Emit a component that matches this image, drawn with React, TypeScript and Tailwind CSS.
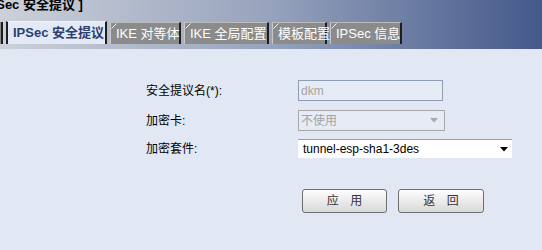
import React from "react";

const tabs = ["IKE 对等体", "IKE 全局配置", "模板配置", "IPSec 信息"];
const tabWidths = [71, 85, 55, 72];

function Notch() {
  return (
    <svg className="absolute left-0 top-0" width="6" height="6" viewBox="0 0 6 6">
      <line x1="0.5" y1="5.5" x2="5.5" y2="0.5" stroke="#f2f2f2" strokeWidth="1" />
    </svg>
  );
}

function Arrow({ color }: { color: string }) {
  return (
    <svg width="8" height="5" viewBox="0 0 8 5">
      <polygon points="0,0 8,0 4,4.5" fill={color} />
    </svg>
  );
}

export default function App() {
  const font = { fontFamily: '"Liberation Sans", "Noto Sans CJK SC", sans-serif' };
  return (
    <div className="w-[542px] h-[250px] overflow-hidden bg-[#e1e8f4] flex flex-col" style={font}>
      <div className="h-[49px] bg-gradient-to-r from-[#ccd1d9] via-[#97a3bd] to-[#45598a] flex flex-col">
        <div className="h-[26px] -mt-[5px] -ml-[24px] text-[13px] font-bold text-black leading-[20px] whitespace-nowrap">
          [ IPSec 安全提议 ]
        </div>
        <div className="flex items-end h-[23px] gap-[3px]">
          <div className="w-[3px] h-[22px] bg-[#8c8c8c] border-r-2 border-[#1e1e1e]" />
          <div className="relative w-[101px] h-[23px] bg-[#e3eaf6] border-l-2 border-l-[#1e1e1e] border-r-2 border-r-[#1e1e1e] border-t border-t-[#f4f4f4] flex items-center pl-[5px] text-[13px] font-bold text-[#2b3f72] whitespace-nowrap">
            <Notch />
            IPSec 安全提议
          </div>
          {tabs.map((t, i) => (
            <div
              key={t}
              className="relative h-[22px] bg-[#8b8b8b] border-t border-t-[#bcbcbc] border-l border-l-[#c9c9c9] border-r-2 border-r-[#1e1e1e] flex items-center pl-[5px] text-[13px] text-white whitespace-nowrap"
              style={{ width: tabWidths[i] }}
            >
              <Notch />
              {t}
            </div>
          ))}
        </div>
      </div>
      <div className="flex flex-col pl-[146px] pt-[31px] text-[12px] text-black">
        <div className="flex items-center h-[21px]">
          <div className="w-[152px]">安全提议名(*):</div>
          <div className="w-[145px] h-[21px] border border-[#8d9db5] bg-[#e6ecf6] flex items-center pl-[2px] text-[#a3a3a3]">
            dkm
          </div>
        </div>
        <div className="flex items-center h-[21px] mt-[9px]">
          <div className="w-[152px]">加密卡:</div>
          <div className="w-[147px] h-[21px] border border-[#a8a8a8] bg-[#e6ecf6] flex items-center justify-between pl-[2px] pr-[6px] text-[#a3a3a3]">
            <span>不使用</span>
            <Arrow color="#a8a8a8" />
          </div>
        </div>
        <div className="flex items-center h-[19px] mt-[8px]">
          <div className="w-[152px]">加密套件:</div>
          <div className="w-[214px] h-[19px] border-t border-[#a0a0a0] bg-white flex items-center justify-between pl-[5px] pr-[4px] text-black">
            <span>tunnel-esp-sha1-3des</span>
            <Arrow color="#000" />
          </div>
        </div>
        <div className="flex mt-[31px] ml-[156px] gap-[11px]">
          <button className="w-[85px] h-[24px] rounded-[3px] border border-[#6f6f6f] bg-gradient-to-b from-[#fdfdfd] to-[#d9d9d9] text-[12px] text-[#333] tracking-[4px] pl-[4px]">
            应 用
          </button>
          <button className="w-[86px] h-[24px] rounded-[3px] border border-[#6f6f6f] bg-gradient-to-b from-[#fdfdfd] to-[#d9d9d9] text-[12px] text-[#333] tracking-[4px] pl-[4px]">
            返 回
          </button>
        </div>
      </div>
    </div>
  );
}
